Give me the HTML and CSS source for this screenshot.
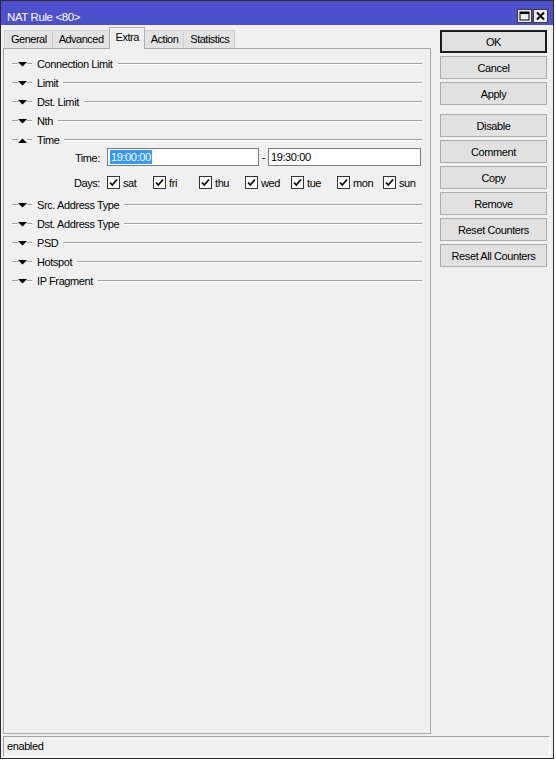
FILE: index.html
```html
<!DOCTYPE html>
<html>
<head>
<meta charset="utf-8">
<link rel="stylesheet" href="styles.css">
</head>
<body>
<div class="window">
  <div class="titlebar">
    <span class="title">NAT Rule &lt;80&gt;</span>
    <div class="tb-btns">
      <span class="tb-btn"><svg width="11" height="10" viewBox="0 0 11 10"><rect x="1" y="1" width="9" height="8" fill="none" stroke="#000" stroke-width="1"/><rect x="1" y="1" width="9" height="2" fill="#000"/></svg></span>
      <span class="tb-btn"><svg width="11" height="10" viewBox="0 0 11 10"><path d="M2 1.5 L9 8.5 M9 1.5 L2 8.5" stroke="#000" stroke-width="2"/></svg></span>
    </div>
  </div>
  <div class="main">
    <div class="left">
      <div class="tabs">
        <span class="tab">General</span>
        <span class="tab">Advanced</span>
        <span class="tab active">Extra</span>
        <span class="tab">Action</span>
        <span class="tab">Statistics</span>
      </div>
      <div class="panel">
        <div class="sec"><span class="dash d1"></span><svg class="tri" width="9" height="5" viewBox="0 0 9 5"><polygon points="0,0 9,0 4.5,4.5"/></svg><span class="dash d2"></span><span class="sec-label">Connection Limit</span><span class="rule"></span></div>
        <div class="sec"><span class="dash d1"></span><svg class="tri" width="9" height="5" viewBox="0 0 9 5"><polygon points="0,0 9,0 4.5,4.5"/></svg><span class="dash d2"></span><span class="sec-label">Limit</span><span class="rule"></span></div>
        <div class="sec"><span class="dash d1"></span><svg class="tri" width="9" height="5" viewBox="0 0 9 5"><polygon points="0,0 9,0 4.5,4.5"/></svg><span class="dash d2"></span><span class="sec-label">Dst. Limit</span><span class="rule"></span></div>
        <div class="sec"><span class="dash d1"></span><svg class="tri" width="9" height="5" viewBox="0 0 9 5"><polygon points="0,0 9,0 4.5,4.5"/></svg><span class="dash d2"></span><span class="sec-label">Nth</span><span class="rule"></span></div>
        <div class="sec"><span class="dash d1"></span><svg class="tri" width="9" height="5" viewBox="0 0 9 5"><polygon points="4.5,0.5 9,5 0,5"/></svg><span class="dash d2"></span><span class="sec-label">Time</span><span class="rule"></span></div>
        <div class="time-row">
          <span class="flabel">Time:</span>
          <span class="input"><span class="sel">19:00:00</span></span>
          <span class="sep">-</span>
          <span class="input in2">19:30:00</span>
        </div>
        <div class="days-row">
          <span class="flabel">Days:</span>
          <span class="day"><svg class="cb" width="13" height="13" viewBox="0 0 13 13"><rect x="0.5" y="0.5" width="12" height="12" fill="#fff" stroke="#333"/><path d="M3 6.5 L5.3 9 L10 3.5" fill="none" stroke="#000" stroke-width="1.7"/></svg><span>sat</span></span>
          <span class="day"><svg class="cb" width="13" height="13" viewBox="0 0 13 13"><rect x="0.5" y="0.5" width="12" height="12" fill="#fff" stroke="#333"/><path d="M3 6.5 L5.3 9 L10 3.5" fill="none" stroke="#000" stroke-width="1.7"/></svg><span>fri</span></span>
          <span class="day"><svg class="cb" width="13" height="13" viewBox="0 0 13 13"><rect x="0.5" y="0.5" width="12" height="12" fill="#fff" stroke="#333"/><path d="M3 6.5 L5.3 9 L10 3.5" fill="none" stroke="#000" stroke-width="1.7"/></svg><span>thu</span></span>
          <span class="day"><svg class="cb" width="13" height="13" viewBox="0 0 13 13"><rect x="0.5" y="0.5" width="12" height="12" fill="#fff" stroke="#333"/><path d="M3 6.5 L5.3 9 L10 3.5" fill="none" stroke="#000" stroke-width="1.7"/></svg><span>wed</span></span>
          <span class="day"><svg class="cb" width="13" height="13" viewBox="0 0 13 13"><rect x="0.5" y="0.5" width="12" height="12" fill="#fff" stroke="#333"/><path d="M3 6.5 L5.3 9 L10 3.5" fill="none" stroke="#000" stroke-width="1.7"/></svg><span>tue</span></span>
          <span class="day"><svg class="cb" width="13" height="13" viewBox="0 0 13 13"><rect x="0.5" y="0.5" width="12" height="12" fill="#fff" stroke="#333"/><path d="M3 6.5 L5.3 9 L10 3.5" fill="none" stroke="#000" stroke-width="1.7"/></svg><span>mon</span></span>
          <span class="day"><svg class="cb" width="13" height="13" viewBox="0 0 13 13"><rect x="0.5" y="0.5" width="12" height="12" fill="#fff" stroke="#333"/><path d="M3 6.5 L5.3 9 L10 3.5" fill="none" stroke="#000" stroke-width="1.7"/></svg><span>sun</span></span>
        </div>
        <div class="sec"><span class="dash d1"></span><svg class="tri" width="9" height="5" viewBox="0 0 9 5"><polygon points="0,0 9,0 4.5,4.5"/></svg><span class="dash d2"></span><span class="sec-label">Src. Address Type</span><span class="rule"></span></div>
        <div class="sec"><span class="dash d1"></span><svg class="tri" width="9" height="5" viewBox="0 0 9 5"><polygon points="0,0 9,0 4.5,4.5"/></svg><span class="dash d2"></span><span class="sec-label">Dst. Address Type</span><span class="rule"></span></div>
        <div class="sec"><span class="dash d1"></span><svg class="tri" width="9" height="5" viewBox="0 0 9 5"><polygon points="0,0 9,0 4.5,4.5"/></svg><span class="dash d2"></span><span class="sec-label">PSD</span><span class="rule"></span></div>
        <div class="sec"><span class="dash d1"></span><svg class="tri" width="9" height="5" viewBox="0 0 9 5"><polygon points="0,0 9,0 4.5,4.5"/></svg><span class="dash d2"></span><span class="sec-label">Hotspot</span><span class="rule"></span></div>
        <div class="sec"><span class="dash d1"></span><svg class="tri" width="9" height="5" viewBox="0 0 9 5"><polygon points="0,0 9,0 4.5,4.5"/></svg><span class="dash d2"></span><span class="sec-label">IP Fragment</span><span class="rule"></span></div>
      </div>
    </div>
    <div class="buttons">
      <span class="btn default">OK</span>
      <span class="btn">Cancel</span>
      <span class="btn">Apply</span>
      <span class="btn group">Disable</span>
      <span class="btn">Comment</span>
      <span class="btn">Copy</span>
      <span class="btn">Remove</span>
      <span class="btn">Reset Counters</span>
      <span class="btn">Reset All Counters</span>
    </div>
  </div>
  <div class="status"><div class="status-box">enabled</div></div>
</div>
</body>
</html>
```

FILE: styles.css
```css
* { box-sizing: border-box; }
html, body { margin: 0; padding: 0; }
body {
  width: 556px;
  height: 760px;
  overflow: hidden;
  background: #ffffff;
  font-family: "Liberation Sans", Arial, sans-serif;
  font-size: 11px;
  letter-spacing: -0.4px;
  color: #000;
}
.window {
  width: 554px;
  height: 759px;
  border: 1px solid #2b2b2b;
  background: #f0f0f0;
  display: flex;
  flex-direction: column;
}
.titlebar {
  height: 24px;
  flex: none;
  background: #4c50cc;
  color: #fff;
  display: flex;
  align-items: flex-start;
  padding: 0 5px 0 6px;
}
.title {
  flex: 1;
  font-size: 11.5px;
  line-height: 14px;
  padding-top: 9px;
}
.tb-btns {
  display: flex;
  gap: 1px;
  padding-top: 8px;
}
.tb-btn {
  width: 15px;
  height: 14px;
  background: #ececec;
  border: 1px solid #3a3a3a;
  display: flex;
  align-items: center;
  justify-content: center;
}
.main {
  flex: 1;
  display: flex;
  padding: 2px 0 0 2px;
  min-height: 0;
}
.left {
  width: 428px;
  display: flex;
  flex-direction: column;
  margin-bottom: 1px;
}
.tabs {
  height: 21px;
  flex: none;
  display: flex;
  align-items: flex-end;
  padding-left: 1px;
  position: relative;
  z-index: 1;
}
.tab {
  height: 18px;
  line-height: 17px;
  padding: 0 5px 0 6px;
  letter-spacing: -0.5px;
  background: #e3e3e3;
  border: 1px solid #d0d0d0;
  border-bottom: none;
  margin-right: -1px;
}
.tab.active {
  height: 22px;
  line-height: 18px;
  background: #f0f0f0;
  border-color: #b0b0b0;
  margin-bottom: -1px;
  padding: 0 5px 0 6px;
  position: relative;
  z-index: 2;
}
.panel {
  flex: 1;
  border: 1px solid #a8a8a8;
  padding: 5px 8px 0 8px;
}
.sec {
  height: 19px;
  display: flex;
  align-items: center;
}
.dash {
  height: 1px;
  background: #a0a0a0;
  box-shadow: 0 1px 0 #ffffff;
  flex: none;
}
.d1 { width: 6px; }
.d2 { width: 5px; }
.tri {
  flex: none;
  fill: #000;
  margin-top: 1px;
}
.sec-label {
  margin-left: 5px;
  margin-right: 5px;
  line-height: 19px;
  padding-top: 2px;
  white-space: nowrap;
}
.rule {
  flex: 1;
  height: 1px;
  background: #a0a0a0;
  box-shadow: 0 1px 0 #ffffff;
}
.time-row {
  height: 18px;
  margin-top: -1px;
  display: flex;
  align-items: center;
  margin-left: -8px;
}
.flabel {
  width: 96px;
  text-align: right;
  margin-right: 7px;
  flex: none;
  padding-top: 1px;
}
.input {
  width: 152px;
  height: 18px;
  background: #fff;
  border: 1px solid #7a7a7a;
  padding-left: 2px;
  line-height: 16px;
  flex: none;
}
.in2 { width: 153px; }
.sel {
  background: #3399ff;
  color: #fff;
  display: inline-block;
  line-height: 14px;
  padding: 0 1px;
}
.sep {
  width: 9px;
  text-align: center;
  flex: none;
}
.days-row {
  height: 13px;
  margin-top: 10px;
  margin-bottom: 6px;
  display: flex;
  align-items: center;
  margin-left: -8px;
}
.day {
  width: 46px;
  display: flex;
  align-items: center;
  flex: none;
}
.day span { padding-top: 1px; }
.cb { flex: none; margin-right: 3px; }
.buttons {
  width: 107px;
  margin-left: 9px;
  padding-top: 3px;
  display: flex;
  flex-direction: column;
  gap: 3px;
}
.btn {
  height: 23px;
  background: #e1e1e1;
  border: 1px solid #adadad;
  display: flex;
  align-items: center;
  justify-content: center;
  white-space: nowrap;
}
.btn.default {
  border: 2px solid #1c1c1c;
}
.btn.group { margin-top: 6px; }
.status {
  height: 23px;
  flex: none;
  padding: 1px 3px 1px 2px;
}
.status-box {
  height: 21px;
  border: 1px solid #a0a0a0;
  border-right-color: #ffffff;
  border-bottom-color: #ffffff;
  padding-left: 3px;
  line-height: 19px;
}
```
